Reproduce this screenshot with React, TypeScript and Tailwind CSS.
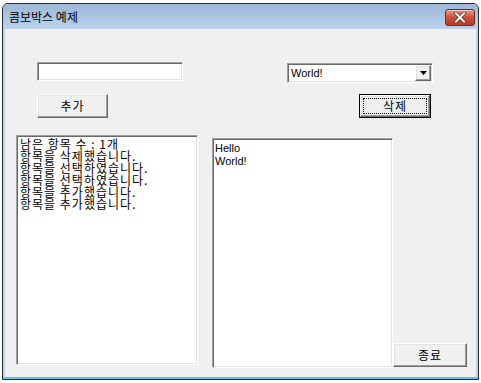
import React from 'react';

const sunken =
  'border border-t-[#a0a0a0] border-l-[#a0a0a0] border-b-white border-r-white shadow-[inset_1px_1px_0_#696969,inset_-1px_-1px_0_#e3e3e3] bg-white';
const raised =
  'border border-t-white border-l-white border-b-[#696969] border-r-[#696969] shadow-[inset_-1px_-1px_0_#a0a0a0,inset_1px_1px_0_#e3e3e3] bg-[#f0f0f0]';

const logLines = [
  '남은 항목 수 : 1개',
  '항목을 삭제했습니다.',
  '항목을 선택하였습니다.',
  '항목을 선택하였습니다.',
  '항목을 추가했습니다.',
  '항목을 추가했습니다.',
];

function CloseButton() {
  return (
    <div className="w-[30px] h-[17px] rounded-[3px] border border-[#6e2b22] bg-gradient-to-b from-[#e4998a] via-[#cc4f39] to-[#b93c25] shadow-[inset_0_1px_0_#f0c4b8] flex items-center justify-center">
      <svg width="14" height="11" viewBox="0 0 14 11">
        <path d="M3 1.5 L11 9.5 M11 1.5 L3 9.5" stroke="#5a1d14" strokeWidth="3.4" strokeLinecap="square" />
        <path d="M3 1.5 L11 9.5 M11 1.5 L3 9.5" stroke="#ffffff" strokeWidth="2" strokeLinecap="square" />
      </svg>
    </div>
  );
}

export default function App() {
  return (
    <div className="w-[481px] h-[383px] bg-white pt-[3px] pl-[2px] font-['Noto_Sans_CJK_KR',sans-serif] text-[12px] text-black">
      <div className="w-[477px] h-[377px] border border-[#2b2b2b] rounded-t-[6px] overflow-hidden flex flex-col bg-[#bcd3ec]">
        <div className="h-[25px] shrink-0 flex items-center justify-between pl-[6px] pr-[3px] bg-gradient-to-b from-[#9cb7d8] to-[#bad2ec]">
          <span className="leading-none text-[12px] text-black mt-[1px]">콤보박스 예제</span>
          <div className="mt-[1px]">
            <CloseButton />
          </div>
        </div>
        <div className="flex-1 mx-[2px] bg-[#f0f0f0] flex flex-col">
          <div className="flex items-start pt-[33px] pl-[32px]">
            <div className={`${sunken} w-[146px] h-[19px]`} />
            <div className={`${sunken} ml-[104px] mt-[1px] w-[146px] h-[20px] flex items-center pl-[3px] pr-[1px]`}>
              <span className="flex-1 font-['Liberation_Sans',sans-serif] text-[11px] leading-none">World!</span>
              <div className={`${raised} w-[16px] h-[16px] flex items-center justify-center`}>
                <svg width="7" height="4" viewBox="0 0 7 4">
                  <path d="M0 0 H7 L3.5 4 Z" fill="#000" />
                </svg>
              </div>
            </div>
          </div>
          <div className="flex items-start mt-[11px] pl-[32px]">
            <button className={`${raised} w-[71px] h-[24px] flex items-center justify-center leading-none tracking-[1px]`}>추가</button>
            <button className="ml-[251px] w-[72px] h-[24px] border border-black bg-[#f0f0f0]">
              <div className={`${raised} w-full h-full p-[2px]`}>
                <div className="w-full h-full border border-dotted border-black flex items-center justify-center leading-none tracking-[1px]">
                  삭제
                </div>
              </div>
            </button>
          </div>
          <div className="flex items-start mt-[17px] pl-[11px]">
            <div className={`${sunken} w-[182px] h-[230px] pl-[3px] pt-[2px]`}>
              {logLines.map((l, i) => (
                <div key={i} className="leading-[12px] whitespace-nowrap tracking-[1px]">
                  {l}
                </div>
              ))}
            </div>
            <div className="flex items-end ml-[14px] mt-[3px]">
              <div className={`${sunken} w-[181px] h-[230px] pl-[2px] pt-[3px] font-['Liberation_Sans',sans-serif] text-[11px]`}>
                <div className="leading-[13px]">Hello</div>
                <div className="leading-[13px]">World!</div>
              </div>
              <button className={`${raised} w-[74px] h-[24px] mb-[1px] flex items-center justify-center leading-none tracking-[1px]`}>종료</button>
            </div>
          </div>
        </div>
        <div className="h-[2px] bg-[#5fc2ec] shrink-0" />
      </div>
    </div>
  );
}
